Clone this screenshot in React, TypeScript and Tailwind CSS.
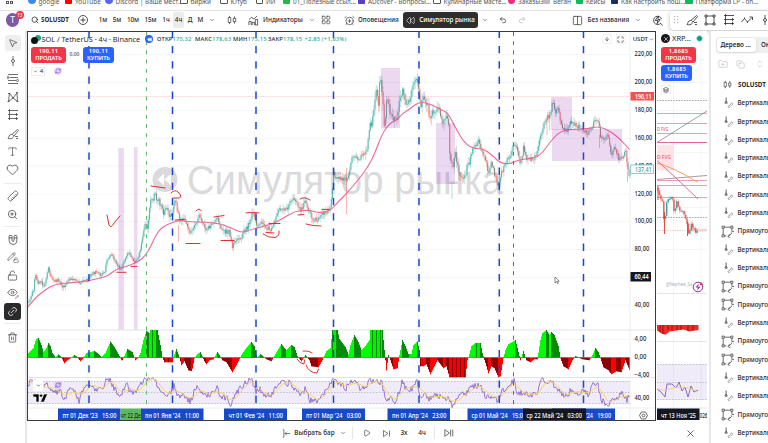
import type { ReactNode } from 'react'
import {
  Search, Heart, ZoomIn, Trash2, LockOpen, Link2, Eye, X, ChevronDown, ArrowDown, Maximize,
  Undo2, Redo2, LayoutGrid, Columns2, AlarmClockPlus, FolderPlus, Copy, Ruler, Magnet, Pencil, Rewind,
  MousePointer2, Type, Play, ChevronsUpDown, Layers, RefreshCw,
} from 'lucide-react'

type Point = [number, number]

// "x,y x,y" -> points
const parse = (s: string): Point[] =>
  s.trim().split(/\s+/).map((p) => p.split(',').map(Number) as Point)

const PRICE = parse(`28,302 30,298 33,290 35,274 38,283 41,280 43,287 46,277 48,268 50,276 53,281 58,280 62,286 64,288 67,280 72,279
76,281 80,285 84,279 88,278 92,274 96,271 100,276 104,273 107,260 111,254 115,262 117,265 121,270 124,260 128,252 131,256 134,262 137,258
140,250 143,235 145,222 147,227 149,210 151,198 153,202 154,190 156,200 158,198 160,205 163,213 166,205 169,217 172,215 175,199 177,210
179,220 182,219 185,222 190,236 192,228 196,225 198,214 202,222 205,230 210,226 213,223 217,218 220,225 223,232 229,232 232,246 236,238
240,240 244,230 247,228 251,216 253,213 256,225 260,222 265,228 272,229 276,214 281,208 286,210 290,202 293,196 296,203 300,210 305,202
309,212 312,219 317,221 320,214 326,213 330,208 332,190 333,173 336,180 339,177 342,180 346,180 349,172 351,158 354,157 358,160 362,155
366,150 368,140 370,122 371,130 373,110 376,92 378,105 380,74 382,95 384,125 387,95 390,115 394,118 397,118 399,100 402,90 406,105 410,97
413,85 417,80 418,88 420,108 424,97 427,103 429,120 432,113 438,108 441,122 444,118 448,115 449,150 453,170 455,150 458,170 462,180
466,170 470,158 473,148 478,140 481,148 485,160 488,172 491,163 494,173 498,188 500,176 503,168 507,158 511,155 513,143 516,148 520,163
523,148 526,160 532,158 536,156 539,140 542,130 546,118 550,115 552,100 555,112 558,108 560,125 564,130 567,130 570,122 575,125 580,128
587,133 592,126 594,118 598,122 600,135 605,140 608,135 611,155 614,145 618,158 620,160 624,153 625,150 627,165 628,175 630,172`)

const MA = parse(`28,307 35,298 45,290 55,284 70,283 88,281 100,278 108,276 116,269 125,267 138,262 145,256 150,248 155,237 160,229
168,224 180,220 190,222 205,222 222,224 233,229 243,233 252,229 270,225 282,219 295,211 308,210 320,213 330,211 338,202 348,192 358,180
368,167 375,153 382,134 390,123 397,120 403,113 410,109 419,101.5 430,104 440,109 448,113 455,127 465,144 475,149 483,148.5 492,155
500,163 510,164 518,160 530,158.5 540,156 550,142 560,131 575,129 588,129 598,126 610,131 620,139 630,150`)

const MACD = parse(`28,353 33,348 35.5,339 38,338 41,345 43,352 45.5,349 48,343 50,346 52,353 55,357 58,354.5 61,357 64,363 67,360 70,358
74,355 77,357 80,361 83,358 86,353 94,351 97,353 101,357 105,353 110,341.5 114,347 118,354 121.5,361 124,356 127,349 132,352 135,360
138,357 140,353 143,340 146,331 149,333 150,330 157,330 160,345 162,357 164,362 172,362 174,354 176,349 179,357 181,365 184,361 188,370
191.5,371 194,358 197,354 200,352 204,361 206,364 209,360 213,359 217,352 219,355 222,360 226,362 232,372 236,365 241,355 245,349
251,342 254,346 256,355 257,357 260,354 266,359 271,361 275,354 281,344 284,348 286,350 291,345 294,347 297,356 301,361 305,355 309,360
311,366 318,367 322,360 326,351 330,348 332,330 337,330 339,339 345,347 348,354 350,345 354,335 358,342 361,350 365,346 369,340 370,330
382,330 384,350 386,370 388,355 390,360 393,369 397,368 399,355 402,340 405,346 408,354 411,354 413,345 417,341.5 419,350 420,366
423,366 426,364 430,374 434,366 437,360 443,368 446,366 449,377 465,377 467,360 469,354 471,346 475,343 480,343 482,353 486,366 488,373
491,366 494,368 498,377 500,376 503,358 505,350 508,344 512,342 515,340 518,352 520,360 523,351 526,360 530,362 534,359 537,359 540,340
542,333 546,330 549,335 551,332 554,335 558,346 560,358 563,366 568,369 572,360 575,356 582,359 589,360 592,355 595,348 598,352
600,358 603,367 608,370 611,374 616,371 621,372 625,360 630,372`)

const RSI = parse(`28,384 33,379 41,390 48,384 54,393 60,390 64,402 70,388 75,392 79,401 84,387 88,384 93,385 97,391 102,388 107,380
110,379 115,390 121,396 127,384 130,391 136,393 141,385 145,379 148,378 155,379 158,388 163,394 170,394 174,386 178,395 183,395 190,402
195,390 199,386 203,396 208,395 213,392 217,388 221,397 227,398 231,405 236,392 241,388 247,382 252,379 256,392 260,390 265,397 273,394
278,383 283,381 287,386 290,381 295,390 302,395 306,388 310,400 318,400 323,394 328,388 332,379 338,384 346,388 350,383 354,380 359,388
366,386 370,380 376,381 382,383 386,402 390,396 396,402 402,382 408,392 412,388 417,379 420,398 426,395 431,400 436,394 443,398 450,400
452,407 458,396 466,394 470,387 475,386 481,386 485,396 492,396 498,400 502,392 507,386 514,381 518,395 523,392 530,396 538,394 541,379
547,381 552,382 558,390 562,395 567,397 572,388 577,394 583,391 588,395 594,383 598,386 602,401 608,405 612,398 617,400 621,392 627,400
630,394`)

const XRP = parse('657,188 660,198 662,203 664,225 666,203 668,197 672,198 674,215 676,199 680,212 683,212 686,222 688,234 691,224 695,232 698,231')
const XRP_RSI = parse('657,389 661,392 665,397 667,384 672,384 676,388 679,382 682,391 685,387 688,397 691,386 694,392 698,390')

function at(pts: Point[], x: number) {
  for (let i = 1; i < pts.length; i++) {
    const [x0, y0] = pts[i - 1]
    const [x1, y1] = pts[i]
    if (x <= x1) return y0 + ((y1 - y0) * (x - x0)) / (x1 - x0)
  }
  return pts[pts.length - 1][1]
}

const noise = (i: number) => {
  const v = Math.sin(i * 127.1 + 11.7) * 43758.5453
  return (v - Math.floor(v)) * 2 - 1
}

const line = (pts: Point[]) => 'M' + pts.map(([x, y]) => `${x.toFixed(1)} ${y.toFixed(1)}`).join('L')

function smooth(pts: Point[]) {
  let d = `M${pts[0]}`
  for (let i = 1; i < pts.length - 1; i++) {
    const [x, y] = pts[i]
    d += `Q${x} ${y} ${(x + pts[i + 1][0]) / 2} ${(y + pts[i + 1][1]) / 2}`
  }
  return d + `L${pts[pts.length - 1]}`
}

function Candles({ pts, step, amp, body = 1.1 }: { pts: Point[]; step: number; amp: number; body?: number }) {
  const out: ReactNode[] = []
  const end = pts[pts.length - 1][0]
  let prev = pts[0][1]
  let i = 0
  for (let x = pts[0][0] + 0.5; x < end; x += step, i++) {
    const k = amp * (x > 365 && x < 470 ? 1.5 : x < 140 ? 0.7 : 1)
    const y = at(pts, x) + noise(i) * 2.4 * k
    const up = y < prev
    const hi = Math.min(y, prev) - (1 + Math.abs(noise(i + 900)) * 4) * k
    const lo = Math.max(y, prev) + (1 + Math.abs(noise(i + 400)) * 4) * k
    const color = up ? '#26a69a' : body > 1.2 || noise(i + 70) > 0.1 ? '#ef5350' : '#6f6663'
    out.push(
      <g key={i} fill={color}>
        <rect x={x} y={hi} width={0.7} height={lo - hi} opacity={0.4} />
        <rect x={x - 0.2} y={Math.min(y, prev)} width={body} height={Math.max(1, Math.abs(y - prev))} opacity={body > 1.2 ? 0.95 : 0.68} />
      </g>,
    )
    prev = y
  }
  return <>{out}</>
}

function Histogram() {
  const out: ReactNode[] = []
  for (let x = 28; x < 630; x++) {
    const y = at(MACD, x)
    const next = at(MACD, x + 1)
    let color
    if (y < 357.5) color = next < y ? '#00ff00' : next > y ? '#078a07' : x % 4 === 0 ? '#078a07' : '#00f200'
    else color = next > y ? '#8b0505' : next < y ? '#ff0000' : x % 4 === 0 ? '#8b0505' : '#f50000'
    out.push(<rect key={x} x={x} y={Math.min(y, 357.5)} width={1.05} height={Math.abs(y - 357.5) + 0.3} fill={color} />)
  }
  return <>{out}</>
}

const rsiLine: Point[] = []
for (let x = 28; x <= 630; x += 1) rsiLine.push([x, Math.min(408, Math.max(378, at(RSI, x) + noise(x) * 3.2))])
const rsiMa: Point[] = []
for (let x = 28; x <= 630; x += 3) {
  let sum = 0
  for (let k = -8; k < 3; k++) sum += at(RSI, Math.max(28, x + k))
  rsiMa.push([x, sum / 11])
}

const BLUE_LINES = [89, 172.5, 256, 333.5, 419, 499.3, 583.5]
const PRICES: [string, number][] = [
  ['220,00', 54], ['200,00', 82], ['180,00', 110], ['160,00', 138], ['140,00', 165.5],
  ['120,00', 193.5], ['100,00', 221], ['80,00', 249], ['40,00', 304.5], ['4,00', 339], ['0,00', 357], ['−4,00', 375], ['40,00', 398],
]
const MARKS = [
  'M107 215L109 225Q111 229 114 223L120 216', 'M117 272.3H126', 'M131 266.4H137', 'M151 186L165 188',
  'M171 193Q175 189 178 192Q183 197 179 198H173', 'M175 220L184 219.4', 'M186 243.5H200', 'M196 211Q199 207 201.500 211',
  'M214 217L224 215.500', 'M221 240.500H234', 'M246 213Q250 212 259 213', 'M269 223.500H280', 'M266 232.500L274 233',
  'M263 234Q268 238 275 237.500Q280 236 279 231', 'M300 199Q304 196 310 200', 'M298 215L304 214.500', 'M306 224Q312 226 321 226',
  'M322 209.400H329', 'M303 351Q307 351 309 351.500L312 353', 'M297 359Q300 364 304 364L304.500 360', 'M306 365Q309 373 317 373L318.500 369',
]
const ZONES = [
  [118.3, 148, 5.6, 182], [134, 147, 3.5, 183], [381, 68, 19, 60], [436, 123, 19, 61], [551, 97, 21, 33], [552, 129, 70, 32],
]

function Label({ x, y, w, children, fill = '#20232b', size = 6.4, weight = 500 }: {
  x: number; y: number; w?: number; children: ReactNode; fill?: string; size?: number; weight?: number
}) {
  return (
    <text x={x} y={y} fill={fill} fontSize={size} fontWeight={weight} textLength={w} lengthAdjust="spacingAndGlyphs" xmlSpace="preserve">
      {children}
    </text>
  )
}

function DateTag({ x, w, fill, text, tx, tw, color = '#fff' }: {
  x: number; w: number; fill: string; text: string; tx: number; tw: number; color?: string
}) {
  return (
    <g>
      <rect x={x} y={408.5} width={w} height={11.5} fill={fill} />
      <Label x={tx} y={417.500} w={tw} fill={color}>{text}</Label>
    </g>
  )
}

function MainChart() {
  return (
    <svg className="absolute inset-0" width="627" height="388" viewBox="28 32 627 388">
      {PRICES.slice(0, 9).map(([, y]) => <path key={y} d={`M28 ${y + 0.5}H630`} stroke="#f3f4f6" strokeWidth="0.8" />)}
      <path d="M28 277.500H630M28 339.500H630" stroke="#f3f4f6" strokeWidth="0.8" />
      {BLUE_LINES.map((x) => <path key={x} d={`M${x - 1.5} 32V408`} stroke="#f3f4f6" strokeWidth="0.8" />)}
      <circle cx="165" cy="179.500" r="12.500" fill="#dadadd" />
      <path d="M164 173.500v12l-6.500-6zM171 173.500v12l-6.500-6z" fill="#fff" />
      <text x="187" y="193.500" fontSize="40" fill="#dadadd" textLength="316" lengthAdjust="spacingAndGlyphs" style={{ fontFamily: 'Liberation Sans, sans-serif' }}>
        Симулятор рынка
      </text>
      <path d="M28 96.500H630" stroke="#fad0cf" strokeWidth="0.8" strokeDasharray="2 0.700" />

      <Candles pts={PRICE} step={1.15} amp={1} />
      <g fill="none" strokeWidth="0.7">
        <path d="M178.500 225V242M346.500 168V214M547 118V135M599.500 135V148M627.500 172V182" stroke="#ef5350" opacity="0.6" />
        <path d="M452 183V199M499.500 175V195M549.500 112V130" stroke="#26a69a" opacity="0.5" />
      </g>
      <path d={smooth(MA)} fill="none" stroke="#ec6a94" strokeWidth="1.1" />
      {ZONES.map(([x, y, w, h]) => <rect key={x} x={x} y={y} width={w} height={h} fill="#9c27b0" fillOpacity="0.18" />)}

      <path d="M28 330H655M28 377.500H655" stroke="#e0e3eb" strokeWidth="1" />
      <Histogram />
      <path d="M28 357.500H630" stroke="#7c5050" strokeWidth="0.5" />
      <rect x="28" y="381" width="602" height="23" fill="#7e57c2" fillOpacity="0.12" />
      <path d="M28 381.500H630M28 392.500H630M28 403.500H630" stroke="#a5a3ad" strokeWidth="0.6" strokeDasharray="1.500 1.500" />
      <path d={line(rsiLine)} fill="none" stroke="#7e57c2" strokeWidth="0.85" opacity="0.9" />
      <path d={smooth(rsiMa)} fill="none" stroke="#fbd45c" strokeWidth="1" />
      <path d="M28 408H655M630 32V420" stroke="#e6e8ee" strokeWidth="0.8" />

      {BLUE_LINES.map((x) => (
        <path key={x} d={`M${x} 30.800V408`} stroke="#1848cc" strokeWidth="1.500" strokeDasharray="7.300 7.900" />
      ))}
      <path d="M146.500 32V408" stroke="#66bb6a" strokeWidth="1" strokeDasharray="4 5.200" />
      <path d="M513.500 32V408" stroke="#3c8b43" strokeWidth="1" strokeDasharray="4 5.200" />
      <g fill="none" stroke="#e02f2f" strokeWidth="1" strokeLinecap="round">
        {MARKS.map((d) => <path key={d} d={d} />)}
      </g>

      {PRICES.map(([t, y]) => <Label key={y} x={634.500} y={y + 2.400} w={t.length * 2.95}>{t}</Label>)}
      <rect x="630.500" y="92" width="23.500" height="8.500" fill="#ef5350" />
      <Label x={635} y={98.600} w={16.500} fill="#fff" weight={600}>190,11</Label>
      <rect x="630.800" y="165" width="22.700" height="8.500" fill="#fff" stroke="#5dbdb3" strokeWidth="0.7" />
      <Label x={635} y={171.600} w={16.500} fill="#26a69a">137,41</Label>
      <rect x="630.500" y="272" width="20.500" height="9.500" fill="#131722" />
      <Label x={634.500} y={279} w={14} fill="#fff" weight={600}>60,44</Label>

      <DateTag x={58} w={62.500} fill="#1848cc" text="пт 01 Дек '23   15:00" tx={62.500} tw={54} />
      <DateTag x={120.500} w={21} fill="#5cb860" text="чт 22 Де" tx={120.800} tw={20} color="#163018" />
      <DateTag x={141} w={62.500} fill="#1848cc" text="пн 01 Янв '24   11:00" tx={145} tw={54} />
      <DateTag x={224} w={63} fill="#1848cc" text="чт 01 Фев '24   11:00" tx={228.500} tw={54.500} />
      <DateTag x={302} w={63} fill="#1848cc" text="пт 01 Мар '24   03:00" tx={306} tw={55} />
      <DateTag x={387.500} w={62.500} fill="#1848cc" text="пн 01 Апр '24   23:00" tx={392} tw={54.500} />
      <DateTag x={467.500} w={62} fill="#1848cc" text="ср 01 Май '24   15:00" tx={471.500} tw={54.500} />
      <DateTag x={552} w={63} fill="#1848cc" text="'24   19:00" tx={585.500} tw={25.500} />
      <DateTag x={523} w={63} fill="#131722" text="ср 22 Май '24   03:00" tx={526.500} tw={55.500} />
      <path d="M555 277v6l1.500-1.400 1 2 .8-.4-1-2h2z" fill="#fff" stroke="#444" strokeWidth="0.6" />
    </svg>
  )
}

function SideChart() {
  const pink = [113.5, 123.5, 133.5, 142.5, 180.5, 185.5, 197.5]
  return (
    <svg className="absolute inset-0" width="50" height="390" viewBox="657 31 50 390">
      <path d="M657 82.500h50M657 110.500h50M657 152.500h50M657 207.500h50M657 249.500h50M673.500 31v380M701 31v380" stroke="#f1f2f5" strokeWidth="0.8" />
      <rect x="657" y="145" width="17" height="25.500" fill="#fde3e5" />
      <path d="M657 100.500h50M657 217.500h50" stroke="#8b8b8b" strokeWidth="0.8" strokeDasharray="1.500 1.200" />
      {pink.map((y) => <path key={y} d={`M657 ${y}h50`} stroke={y === 142.5 ? '#e0529c' : '#ee8db4'} strokeWidth="0.9" />)}
      <path d="M657 142.500L707 111M657 179.500L707 175.500" stroke="#777" strokeWidth="0.7" />
      <path d="M657 163Q675 168 698 182.500" fill="none" stroke="#f39a4a" strokeWidth="0.9" />
      <path d="M657 160.500Q665 168 676 178L698 199" fill="none" stroke="#ec5a8c" strokeWidth="0.9" />
      <rect x="687" y="228.500" width="20" height="3" fill="#fbdcdc" />
      <path d="M657 230.500h50" stroke="#f2a3a3" strokeWidth="0.6" strokeDasharray="1.500 1" />
      <Label x={657} y={131.200} w={11.500} fill="#ef5a66" size={5}>D FVG</Label>
      <Label x={657} y={159.300} w={14} fill="#ef5a66" size={5.500}>D FVG</Label>
      <Candles pts={XRP} step={1.450} amp={0.750} body={1.450} />
      <path d="M658 186v14M664.500 212v22M687.500 222v14" stroke="#e53935" strokeWidth="0.900" />
      <Label x={666} y={286.300} w={26} fill="#b7b9bf" size={4.800}>@Nephew_Sa</Label>
      <circle cx="698" cy="287" r="4.800" fill="#fff" stroke="#9c27b0" strokeWidth="1" />
      <path d="M699 283.500l-3.500 4h2.500l-1 3.200 3.500-4h-2.500z" fill="#9c27b0" />
      <circle cx="701.200" cy="284" r="1.400" fill="#f23645" />
      <path d="M657 293.500h50M657 341.500h50M657 408h50" stroke="#e0e3eb" strokeWidth="0.9" />
      <path d="M657 325h41.500v5l-9 1.500-6-2-10 1.500-4 .5-4 3.200-4-1.200-4.500-3z" fill="#ee2a2a" />
      <path d="M660 325v7M663 325v9M668 325v5M672 325v5M677 325v5M681 325v4.500M688 325v6M693 325v5" stroke="#8b1010" strokeWidth="0.900" />
      <rect x="657" y="364" width="50" height="36" fill="#7e57c2" fillOpacity="0.12" />
      <path d="M657 364.500h50M657 382.500h50M657 399.500h50" stroke="#a5a3ad" strokeWidth="0.600" strokeDasharray="1.500 1.500" />
      <path d={line(XRP_RSI)} fill="none" stroke="#7e57c2" strokeWidth="0.900" />
      <path d="M657 389Q664 391 670 389T682 387T698 392" fill="none" stroke="#fbd45c" strokeWidth="0.900" />
      <Label x={699.500} y={417.500} w={8}>026</Label>
      <rect x="657" y="408.500" width="42.500" height="11.500" fill="#131722" />
      <Label x={661} y={417.500} w={35} fill="#fff">чт 13 Ноя '25</Label>
    </svg>
  )
}

// small drawing-tool icons on a 12px grid
const PATHS = {
  trend: 'M6 1v3.500M6 7.500V11M6 4.500a1.500 1.500 0 1 1 0 3a1.500 1.500 0 1 1 0-3',
  fib: 'M1 1.500h10M3 4.500h8M1 7.500h8M1 10.500h10M1 3.500a1 1 0 1 1 0 2a1 1 0 1 1 0-2M10.500 6.500a1 1 0 1 1 0 2a1 1 0 1 1 0-2',
  pattern: 'M1.500 10.500L2.500 2L6 7L10 2L10.500 10.500L6 7ZM1 2.500h2M9 1.500h2M5 7h2M0.500 10.500h2M9.500 10.500h2',
  forecast: 'M1 1.500h10M1 5.500h10M1 9.500h10M2.500 0v3M2.500 8v3M9.500 4v3M9.500 8v3M2.500 3v5',
  brush: 'M1 10.500C2 10 1.500 7 4 6.500C6 6 7.500 8 6 9.500C5 10.800 3 11 1 10.500ZM5 6.300L10.500 1.500L11.500 2.500L7 8M8 8.500h3M9 10.500h2',
  rect: 'M2 3v6M10 3v6M3 2h6M3 10h6M1 1h2v2h-2zM9 1h2v2h-2zM1 9h2v2h-2zM9 9h2v2h-2z',
  path: 'M0.500 8L3.500 4.500L6.500 8L11 3.500M8.500 3h3v3M3.500 3.500v1.500M6.500 7.500v1.500',
  candles: 'M3 1v2M3 9v2M1.500 3h3v6h-3zM9 1.500v2.500M9 8v2.500M7.500 4h3v4h-3z',
  indicators: 'M1 11V7h2.500v4M4.500 11V8H7v3M8 11V5h2.500v6zM1 5L4 2.500L6.500 4.500L10 1',
  linkedRect: 'M2 3v6M10 3v3M3 2h6M3 10h2M1 1h2v2h-2zM9 1h2v2h-2zM1 9h2v2h-2zM7 10.500l3-3M8 8.500l-1 1a1.200 1.200 0 0 0 1.700 1.700M9.500 7l.8-.8a1.200 1.200 0 0 1 1.700 1.700',
  pick: 'M1 1h1.500v10H1M11 6H4M6.500 3.500L4 6L6.500 8.500',
  step: 'M2 2L8 6L2 10ZM10 2v8',
  skip: 'M1 2L6.500 6L1 10ZM8 2v8M10.500 2v8',
}

function Glyph({ d, size = 11, className = '' }: { d: keyof typeof PATHS; size?: number; className?: string }) {
  return (
    <svg width={size} height={size} viewBox="0 0 12 12" className={`shrink-0 ${className}`} fill="none" stroke="currentColor" strokeWidth="0.800">
      <path d={PATHS[d]} />
    </svg>
  )
}

function VerticalLineIcon() {
  return (
    <svg width="11" height="11" viewBox="0 0 12 12" className="shrink-0" fill="none">
      <path d="M4.500 0.500v5M4.500 4.500l-1.300 2.200h2.600z" stroke="#444" strokeWidth="0.900" />
      <path d="M7.500 10l2.200-2.200M8 8.800l-1.200 1.200a1.100 1.100 0 0 0 1.500 1.500l1-1M9 7.800l1-1a1.100 1.100 0 0 1 1.500 1.500l-1.200 1.200" stroke="#888" strokeWidth="0.800" />
    </svg>
  )
}

function Cell({ className, children }: { className: string; children?: ReactNode }) {
  return <div className={`flex h-full shrink-0 items-center justify-center whitespace-nowrap ${className}`}>{children}</div>
}

const BOOKMARKS = [
  { label: 'google', box: 'w-[36.5px]', icon: 'bg-[#4285f4] rounded-full' },
  { label: 'YouTube', box: 'w-[40.500px]', icon: 'bg-[#f00]' },
  { label: 'Discord | Ваше мест...', box: 'w-[75px]', icon: 'bg-[#5865f2] rounded-full' },
  { label: 'биржи', box: 'w-[40px]', icon: 'border border-[#555]' },
  { label: 'Ютуб', box: 'w-[35.500px]', icon: 'border border-[#555]' },
  { label: 'ИИ', box: 'w-[27px]', icon: 'border border-[#555]' },
  { label: '01_Полезные ссыл...', box: 'w-[75px]', icon: 'bg-[#2ab54a]' },
  { label: 'ADcover - Вопросы...', box: 'w-[75.500px]', icon: 'bg-[#5b3cc4]' },
  { label: 'Кулинарные масте...', box: 'w-[74.500px]', icon: 'border border-[#555]' },
  { label: 'Заказы3', box: 'w-[35px]', icon: 'bg-[#e8317c] rounded-full' },
  { label: 'Веган', box: 'w-[33px]', icon: 'bg-[#bbb]' },
  { label: 'Кейсы', box: 'w-[35px]', icon: 'bg-[#16b65f]' },
  { label: 'Как настроить пош...', box: 'w-[74.500px]', icon: 'bg-[#17305c]' },
  { label: 'Платформа LP - on...', box: 'w-[80px]', icon: 'bg-[#16b65f]' },
]

function Bookmarks() {
  return (
    <div className="flex h-[10.500px] shrink-0 overflow-hidden border-b border-[#e3e3e5] text-[6.400px] leading-[7px] text-[#555]">
      <div className="w-[28px] shrink-0 pl-[6px]">
        <div className="mt-[1px] grid w-[7px] grid-cols-2 gap-[1px]">
          <i className="h-[2.500px] border border-[#555]" /><i className="h-[2.500px] border border-[#555]" />
        </div>
      </div>
      {BOOKMARKS.map((b) => (
        <div key={b.label} className={`flex shrink-0 whitespace-nowrap ${b.box}`}>
          <i className={`-mt-[4px] mr-[3px] h-[7.500px] w-[7.500px] shrink-0 rounded-[1px] ${b.icon}`} />
          <span className="-mt-[2.500px]">{b.label}</span>
        </div>
      ))}
    </div>
  )
}

const chevron = <ChevronDown size={6} strokeWidth={2} />

function TopBar() {
  return (
    <div className="flex h-[20px] shrink-0 text-[6.300px] font-medium text-[#26282e]">
      <Cell className="relative w-[25px]">
        <div className="-mt-[1px] flex h-[13.500px] w-[13.500px] items-center justify-center rounded-full bg-[#7e57a5] text-[8.500px] font-normal text-white">T</div>
        <div className="absolute left-[15.500px] top-[0.500px] flex h-[8px] w-[8.500px] items-center justify-center rounded-full bg-[#f23645] text-[4.500px] text-white">13</div>
      </Cell>
      <div className="flex h-[19px] grow items-center">
        <Cell className="w-[16px] pl-[3px]"><Search size={8} strokeWidth={2.300} /></Cell>
        <Cell className="w-[31px] justify-start! text-[6.200px] font-bold">SOLUSDT</Cell>
        <Cell className="w-[22px]">
          <svg width="10" height="10" viewBox="0 0 10 10" fill="none" stroke="currentColor" strokeWidth="0.800"><circle cx="5" cy="5" r="4.500" /><path d="M5 2.500v5M2.500 5h5" /></svg>
        </Cell>
        <Cell className="w-[16px] pl-[2px]">1м</Cell>
        <Cell className="w-[14px]">5м</Cell>
        <Cell className="w-[18px]">10м</Cell>
        <Cell className="w-[17px]">15м</Cell>
        <Cell className="w-[14px]">1ч</Cell>
        <Cell className="h-[16px]! w-[11px] rounded-[2px] bg-[#ececed]">4ч</Cell>
        <Cell className="w-[12px]">Д</Cell>
        <Cell className="w-[9px]">М</Cell>
        <Cell className="w-[14px]">{chevron}</Cell>
        <Cell className="w-[25px]"><Glyph d="candles" size={10} /></Cell>
        <Cell className="w-[18px]"><Glyph d="indicators" size={11} /></Cell>
        <Cell className="w-[41px] justify-start! pl-[1px] text-[6.400px]">Индикаторы</Cell>
        <Cell className="w-[17px]">{chevron}</Cell>
        <Cell className="w-[12px]"><LayoutGrid size={10} strokeWidth={1.400} /></Cell>
        <Cell className="w-[35px]"><AlarmClockPlus size={11} strokeWidth={1.400} /></Cell>
        <Cell className="w-[43px] -ml-[9px] justify-start!">Оповещения</Cell>
        <Cell className="ml-[2px] h-[16px]! w-[75px] gap-[4px] rounded-[3px] bg-[#2e2e2e] text-white">
          <Rewind size={9} strokeWidth={1.600} />Симулятор рынка
        </Cell>
        <Cell className="w-[14px]">{chevron}</Cell>
        <Cell className="w-[22px]"><Undo2 size={8} strokeWidth={2} /></Cell>
        <Cell className="w-[16px] text-[#b3b3b6]"><Redo2 size={8} strokeWidth={2} /></Cell>
        <Cell className="ml-[38.500px] w-[17px]"><Columns2 size={11} strokeWidth={1.500} /></Cell>
        <Cell className="w-[46.500px] justify-start! pl-[2px]">Без названия</Cell>
        <Cell className="w-[12px]">{chevron}</Cell>
        <Cell className="w-[26px]">
          <svg width="11" height="11" viewBox="0 0 12 12" fill="none" stroke="currentColor" strokeWidth="0.900">
            <path d="M10.500 4.500A4.500 4.500 0 1 0 9.500 9L11.500 11.500M7 1L3.500 6h3L5.500 9.500L9 5H6.500Z" />
          </svg>
        </Cell>
        <Cell className="h-[19px]! w-[101px] justify-start! rounded-l-[4px] bg-white shadow-[0_1px_4px_rgba(0,0,0,0.28)]">
          <Cell className="w-[13px]">
            <svg width="5" height="8" viewBox="0 0 5 8" fill="#bbb"><path d="M0 0h1.300v1.300H0zM3 0h1.300v1.300H3zM0 3h1.300v1.300H0zM3 3h1.300v1.300H3zM0 6h1.300v1.300H0zM3 6h1.300v1.300H3z" /></svg>
          </Cell>
          <Cell className="w-[18px]"><Glyph d="brush" size={12} /></Cell>
          <Cell className="w-[18px]"><Glyph d="rect" size={12} /></Cell>
          <Cell className="w-[19px]"><Glyph d="forecast" size={12} /></Cell>
          <Cell className="w-[18px]"><Glyph d="path" size={12} /></Cell>
          <Cell className="w-[18px]"><Glyph d="trend" size={12} /></Cell>
        </Cell>
      </div>
    </div>
  )
}

function Tool({ children, selected }: { children: ReactNode; selected?: boolean }) {
  return (
    <div className="flex h-[18.100px] w-[25px] items-center justify-center text-[#45474d]">
      <div className={`flex h-[16px] w-[16px] items-center justify-center rounded-[3px] ${selected ? 'bg-[#eeeeef]' : ''}`}>{children}</div>
    </div>
  )
}

function Sidebar() {
  return (
    <div className="w-[25px] shrink-0 pt-[3.500px]">
      <Tool selected><MousePointer2 size={10} strokeWidth={1.700} /></Tool>
      <Tool><Glyph d="trend" size={12} /></Tool>
      <Tool><Glyph d="fib" size={12} /></Tool>
      <Tool><Glyph d="pattern" size={12} /></Tool>
      <Tool><Glyph d="forecast" size={12} /></Tool>
      <Tool><Glyph d="brush" size={12} /></Tool>
      <Tool><Type size={11} strokeWidth={1.400} /></Tool>
      <Tool><Heart size={13} strokeWidth={1.500} /></Tool>
      <div className="mx-[4px] mt-[4px] mb-[3.500px] h-px bg-[#ebebed]" />
      <Tool><Ruler size={12} strokeWidth={1.500} className="rotate-90" /></Tool>
      <Tool><ZoomIn size={11} strokeWidth={1.700} /></Tool>
      <div className="mx-[4px] mt-[2.500px] mb-[3px] h-px bg-[#ebebed]" />
      <Tool><Magnet size={12} strokeWidth={1.500} className="rotate-[135deg]" /></Tool>
      <Tool>
        <div className="flex items-end"><Pencil size={9} strokeWidth={1.600} className="-mr-[3px] mb-[2px]" /><LockOpen size={6} strokeWidth={2} /></div>
      </Tool>
      <Tool><LockOpen size={11} strokeWidth={1.600} /></Tool>
      <Tool>
        <div className="flex items-end"><Eye size={11} strokeWidth={1.500} className="mb-[1px]" /><Pencil size={4} strokeWidth={2.500} className="-ml-[3px]" /></div>
      </Tool>
      <div className="mx-[4px] mt-[1px] flex h-[17px] items-center justify-center rounded-[3px] bg-[#2a2a2c] text-white">
        <Link2 size={11} strokeWidth={1.600} className="-rotate-45" />
      </div>
      <div className="mx-[4px] mt-[3px] mb-[4px] h-px bg-[#ebebed]" />
      <Tool><Trash2 size={11} strokeWidth={1.600} /></Tool>
    </div>
  )
}

function Order({ price, side, className }: { price: string; side: string; className: string }) {
  return (
    <div className={`flex h-[16px] flex-col items-center justify-center rounded-[3px] text-[5.700px] font-semibold leading-[6.600px] text-white ${className}`}>
      <span className="tracking-[0.300px]">{price}</span>
      <span>{side}</span>
    </div>
  )
}

function Legend() {
  return (
    <div className="relative pl-[3px] pt-[1px]">
      <div className="flex h-[13px] items-center whitespace-nowrap">
        <div className="relative h-[9px] w-[10.500px] shrink-0">
          <i className="absolute right-[1px] top-0 h-[6px] w-[6px] rounded-full bg-[#26a17b]" />
          <i className="absolute bottom-0 left-0 h-[6.500px] w-[6.500px] rounded-full bg-[#111]" />
        </div>
        <span className="w-[103.500px] text-[7.300px] text-[#26282e]">SOL / TetherUS · 4ч · Binance</span>
        <div className="mr-[4px] flex h-[8px] w-[8px] items-center justify-center rounded-full bg-[#2962ff] text-white">
          <Rewind size={5} fill="currentColor" />
        </div>
        <div className="flex text-[5.800px] font-medium tracking-[0.150px] text-[#26a69a]">
          <span className="w-[38px]"><b className="font-medium text-[#26282e]">ОТКР</b>175,32</span>
          <span className="w-[38px]"><b className="font-medium text-[#26282e]">МАКС</b>178,63</span>
          <span className="w-[35px]"><b className="font-medium text-[#26282e]">МИН</b>175,15</span>
          <span className="w-[36.500px]"><b className="font-medium text-[#26282e]">ЗАКР</b>178,15</span>
          <span>+2,85 (+1,63%)</span>
        </div>
      </div>
      <div className="mt-[1px] flex items-center">
        <Order price="190,11" side="ПРОДАТЬ" className="w-[35px] bg-[#f23645]" />
        <span className="w-[17px] text-center text-[5px] text-[#26282e]">0,00</span>
        <Order price="190,11" side="КУПИТЬ" className="w-[31px] bg-[#2962ff]" />
      </div>
      <div className="mt-[4px] flex items-center gap-[9px]">
        <div className="flex h-[9px] w-[14px] items-center justify-center gap-[2px] border border-[#eee] bg-white text-[6px] text-[#26282e]">
          <ChevronDown size={5} strokeWidth={2.500} />4
        </div>
        <div className="flex h-[8px] w-[8px] items-center justify-center rounded-full bg-[#ede2ff] text-[#7c3aed]"><RefreshCw size={6} strokeWidth={2.500} /></div>
      </div>
    </div>
  )
}

function ChartPane() {
  return (
    <div className="relative h-[390.500px] w-[629px] shrink-0 border border-[#3a3b40] bg-white">
      <MainChart />
      <Legend />
      <div className="absolute right-[1px] top-[2px] flex h-[11px] items-center text-[6px] font-medium text-[#26282e]">
        <div className="mr-[4px] flex h-[10px] w-[10px] items-center justify-center border border-[#f1f1f1] bg-white"><ArrowDown size={6} strokeWidth={2.200} /></div>
        <div className="mr-[7px] flex h-[10px] w-[10px] items-center justify-center border border-[#f1f1f1] bg-white"><Maximize size={7} strokeWidth={2.200} /></div>
        <span className="mr-[1px]">USDT</span><ChevronDown size={5} strokeWidth={2.500} />
      </div>
      <div className="absolute left-[5px] top-[348px] flex items-center gap-[11px]">
        <div className="flex h-[11px] w-[10px] items-center justify-center bg-white"><ChevronDown size={5} strokeWidth={2.500} /></div>
        <div className="flex h-[8px] w-[8px] items-center justify-center rounded-full bg-[#ddd0fa] text-[#7c3aed]"><RefreshCw size={6} strokeWidth={2.500} /></div>
      </div>
      <svg className="absolute left-[4px] top-[361.500px]" width="16" height="10" viewBox="0 0 16 10" stroke="#fff" strokeWidth="0.600" fill="#000">
        <path d="M1 1h6v8H4V4H1zM15.500 1L12 9H8.500L12 1z" /><circle cx="9" cy="2.600" r="1.600" />
      </svg>
      <div className="absolute right-[7px] top-[379px] text-[#444]">
        <svg width="9" height="9" viewBox="0 0 9 9" fill="none" stroke="currentColor" strokeWidth="0.800"><path d="M2.500 1h4l2 3.500l-2 3.500h-4l-2-3.500z" /><circle cx="4.500" cy="4.500" r="1.400" /></svg>
      </div>
    </div>
  )
}

function XrpPane() {
  return (
    <div className="relative h-[390.500px] w-[50px] shrink-0 overflow-hidden bg-white">
      <SideChart />
      <div className="relative pl-[4px] pt-[2.500px]">
        <div className="flex h-[11px] items-center">
          <div className="flex h-[9px] w-[9px] items-center justify-center rounded-full bg-[#17181c] text-white"><X size={6} strokeWidth={2.500} /></div>
          <span className="ml-[2px] w-[24px] text-[7.500px] text-[#26282e]">XRP...</span>
          <i className="h-[7px] w-[7px] rounded-full border-[1.500px] border-[#cdeee3] bg-[#089981]" />
        </div>
        <Order price="1,8685" side="ПРОДАТЬ" className="mt-[3px] w-[35px] bg-[#f23645]" />
        <Order price="1,8685" side="КУПИТЬ" className="mt-[2px] w-[31px] bg-[#2962ff]" />
        <div className="mt-[4px] flex h-[9px] w-[10px] items-center justify-center border border-[#eee] bg-white"><Layers size={6} strokeWidth={2} /></div>
      </div>
    </div>
  )
}

function ReplayBar() {
  return (
    <div className="flex grow items-center bg-white pt-[2px] text-[6.400px] font-medium text-[#26282e]">
      <Cell className="ml-[252px] w-[14px]"><Glyph d="pick" size={9} /></Cell>
      <Cell className="w-[43px]">Выбрать бар</Cell>
      <Cell className="w-[14px]">{chevron}</Cell>
      <div className="ml-[2px] h-[12px] w-px bg-[#e6e6e8]" />
      <Cell className="ml-[4px] w-[20px]"><Play size={8} strokeWidth={1.800} /></Cell>
      <Cell className="w-[18px]"><Glyph d="step" size={9} /></Cell>
      <Cell className="w-[18px]">3x</Cell>
      <Cell className="w-[18px]">4ч</Cell>
      <div className="ml-[3px] h-[12px] w-px bg-[#e6e6e8]" />
      <Cell className="ml-[4px] w-[20px]"><Glyph d="skip" size={10} /></Cell>
      <Cell className="ml-auto mr-[10.500px] w-[16px]"><X size={11} strokeWidth={1.500} /></Cell>
    </div>
  )
}

const OBJECTS = 'VVVVVVVPVVPPVPPVVPV'.split('')

function ObjectTree() {
  return (
    <div className="flex w-[57px] shrink-0 flex-col overflow-hidden bg-white pt-[6.500px] text-[6.300px] text-[#26282e]">
      <div className="ml-[5px] flex h-[16px] w-[70px] shrink-0 items-center rounded-[3px] bg-[#efeff0] pl-[1px] font-semibold">
        <div className="flex h-[14px] w-[39px] items-center whitespace-nowrap rounded-[3px] bg-white pl-[3.500px] shadow-sm">Дерево ...</div>
        <span className="ml-[5px] font-medium">Окно</span>
      </div>
      <div className="ml-[6px] flex h-[22.500px] shrink-0 items-center text-[#b9bbc0]">
        <Cell className="w-[11px]"><FolderPlus size={10} strokeWidth={1.500} /></Cell>
        <Cell className="ml-[7px] w-[11px]"><Copy size={9} strokeWidth={1.600} /></Cell>
        <Cell className="ml-[8px] w-[11px]"><ChevronsUpDown size={10} strokeWidth={1.600} /></Cell>
      </div>
      <div className="flex h-[18.300px] shrink-0 items-center text-[6.200px] font-bold">
        <Cell className="w-[27px] pl-[5px]"><Glyph d="candles" size={9} /></Cell>SOLUSDT
      </div>
      {OBJECTS.map((kind, i) => (
        <div key={i} className="flex h-[18.320px] shrink-0 items-center whitespace-nowrap font-medium">
          <Cell className="w-[26.500px] pl-[6px]">
            {kind === 'V' ? <VerticalLineIcon /> : <Glyph d="linkedRect" size={13} className="text-[#555]" />}
          </Cell>
          {kind === 'V' ? 'Вертикальная линия' : 'Прямоугольник'}
        </div>
      ))}
    </div>
  )
}

export default function App() {
  return (
    <div className="flex h-[443px] w-[768px] flex-col overflow-hidden bg-white font-['Noto_Sans',sans-serif]">
      <Bookmarks />
      <TopBar />
      <div className="flex h-[412.500px] shrink-0">
        <Sidebar />
        <div className="w-[2px] shrink-0 bg-[#e7e7e9]" />
        <div className="flex w-[682px] shrink-0 flex-col">
          <div className="flex gap-px">
            <ChartPane />
            <XrpPane />
          </div>
          <ReplayBar />
        </div>
        <div className="w-[2px] shrink-0 bg-[#e7e7e9]" />
        <ObjectTree />
      </div>
    </div>
  )
}
